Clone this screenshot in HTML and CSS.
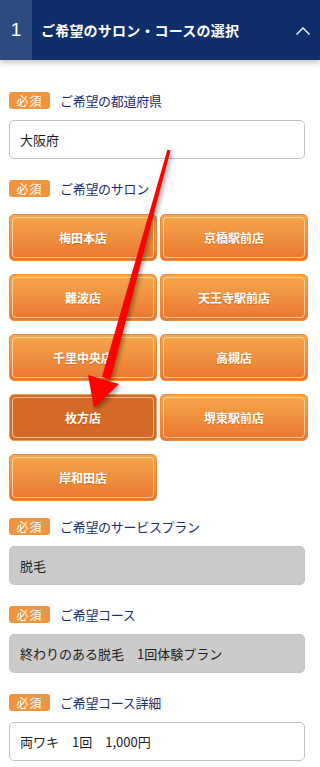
FILE: index.html
```html
<!DOCTYPE html>
<html lang="ja">
<head>
<meta charset="utf-8">
<title>ご希望のサロン・コースの選択</title>
<link rel="stylesheet" href="styles.css">
</head>
<body>
<div class="page">
  <header class="step-head">
    <div class="step-num">1</div>
    <div class="step-title">ご希望のサロン・コースの選択</div>
    <svg class="chev" width="16" height="10" viewBox="0 0 16 10"><path d="M1.5 8.5 L8 2 L14.5 8.5" fill="none" stroke="#fff" stroke-width="1.4"/></svg>
  </header>

  <main class="form">
    <section class="field first">
      <div class="label"><span class="badge">必須</span><span class="label-text">ご希望の都道府県</span></div>
      <div class="box">大阪府</div>
    </section>

    <section class="field">
      <div class="label"><span class="badge">必須</span><span class="label-text">ご希望のサロン</span></div>
      <div class="salons">
        <div class="salon">梅田本店</div>
        <div class="salon">京橋駅前店</div>
        <div class="salon">難波店</div>
        <div class="salon">天王寺駅前店</div>
        <div class="salon">千里中央店</div>
        <div class="salon">高槻店</div>
        <div class="salon selected">枚方店</div>
        <div class="salon">堺東駅前店</div>
        <div class="salon">岸和田店</div>
      </div>
    </section>

    <section class="field after-grid">
      <div class="label"><span class="badge">必須</span><span class="label-text">ご希望のサービスプラン</span></div>
      <div class="box gray">脱毛</div>
    </section>

    <section class="field">
      <div class="label"><span class="badge">必須</span><span class="label-text">ご希望コース</span></div>
      <div class="box gray">終わりのある脱毛　1回体験プラン</div>
    </section>

    <section class="field">
      <div class="label"><span class="badge">必須</span><span class="label-text">ご希望コース詳細</span></div>
      <div class="box">両ワキ　1回　1,000円</div>
    </section>
  </main>

  <svg class="arrow" width="320" height="767" viewBox="0 0 320 767">
    <polygon points="170.5,150.4 167.5,149.6 102,377 110.5,379.5" fill="#ff0000"/>
    <polygon points="88,375 119,384 94,408" fill="#ff0000"/>
  </svg>
</div>
</body>
</html>
```

FILE: styles.css
```css
* { box-sizing: border-box; }

html, body {
  margin: 0;
  padding: 0;
  background: #fff;
}

body {
  font-family: "Noto Sans CJK JP", "Noto Sans", "Liberation Sans", sans-serif;
  width: 320px;
  height: 767px;
  overflow: hidden;
}

.page {
  position: relative;
  width: 320px;
  height: 767px;
}

.step-head {
  display: flex;
  align-items: center;
  height: 60px;
  background: #0f2f6b;
  color: #fff;
  box-shadow: 0 3px 5px rgba(0, 0, 0, 0.22);
}

.step-num {
  width: 32px;
  height: 100%;
  background: #2b4b81;
  display: flex;
  align-items: center;
  justify-content: center;
  font-family: "Liberation Sans", sans-serif;
  font-size: 19px;
}

.step-title {
  flex: 1;
  padding-left: 9px;
  font-size: 14px;
  font-weight: bold;
  letter-spacing: 0.2px;
}

.chev {
  margin-right: 9px;
  margin-top: 1px;
}

.form {
  padding: 32px 0 0 9px;
}

.field { margin-top: 21px; }
.field.first { margin-top: 0; }
.field.after-grid { margin-top: 17px; }

.label {
  display: flex;
  align-items: center;
  height: 17px;
}

.badge {
  width: 41px;
  height: 17px;
  border-radius: 3px;
  background: #f0953d;
  color: #fff;
  font-size: 12px;
  line-height: 17px;
  text-align: center;
  letter-spacing: 1px;
}

.label-text {
  margin-left: 10px;
  color: #1c2f72;
  font-size: 13px;
  line-height: 17px;
  letter-spacing: -0.3px;
}

.box {
  margin-top: 11px;
  width: 296px;
  height: 39px;
  border: 1px solid #c2c2c2;
  border-radius: 5px;
  padding-left: 10px;
  display: flex;
  align-items: center;
  font-size: 13px;
  color: #222;
  background: #fff;
}

.box.gray {
  background: #cbcbcb;
  border-color: #c6c6c6;
}

.salons {
  margin-top: 17px;
  display: grid;
  grid-template-columns: 148px 148px;
  column-gap: 3px;
  row-gap: 13px;
}

.salon {
  position: relative;
  height: 47px;
  border: 1px solid #ea8a3b;
  border-radius: 5px;
  background: linear-gradient(#f6a84c, #e9772f);
  color: #fff;
  font-size: 12px;
  font-weight: bold;
  display: flex;
  align-items: center;
  justify-content: center;
  text-shadow: 0 1px 1px rgba(160, 70, 10, 0.45);
}

.salon::before {
  content: "";
  position: absolute;
  inset: 2px;
  border: 1px solid rgba(255, 222, 180, 0.75);
  border-radius: 4px;
}

.salon.selected {
  background: #d56928;
  border-color: #e7a258;
}

.arrow {
  position: absolute;
  top: 0;
  left: 0;
  pointer-events: none;
  filter: drop-shadow(2px 3px 2px rgba(0, 0, 0, 0.35));
}
```
